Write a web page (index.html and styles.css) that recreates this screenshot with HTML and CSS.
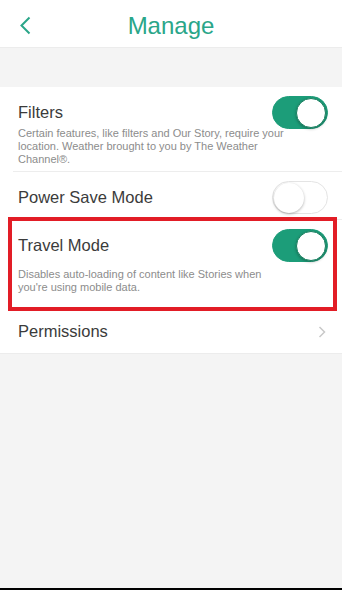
FILE: index.html
```html
<!DOCTYPE html>
<html>
	<head>
		<meta charset="utf-8">
		<title>Manage</title>
		<meta name="viewport" content="width=device-width">
		<link rel="stylesheet" href="styles.css">
	</head>
	<body>

		<header class="barra">
			<a class="atras" href="#">
				<svg width="12" height="19" viewBox="0 0 12 19"><polyline points="10.5,1.5 2.5,9.5 10.5,17.5" fill="none" stroke="#2aa689" stroke-width="2"/></svg>
			</a>
			<h1 class="titulo">Manage</h1>
			<span></span>
		</header>

		<div class="banda"></div>

		<ul class="lista">
			<li class="fila">
				<div class="cabeza">
					<span class="nombre">Filters</span>
					<span class="switch on"><span class="bola"></span></span>
				</div>
				<p class="desc">Certain features, like filters and Our Story, require your location. Weather brought to you by The Weather Channel®.</p>
			</li>
			<li class="fila">
				<div class="cabeza">
					<span class="nombre">Power Save Mode</span>
					<span class="switch"><span class="bola"></span></span>
				</div>
			</li>
			<li class="fila marcada">
				<div class="cabeza">
					<span class="nombre">Travel Mode</span>
					<span class="switch on"><span class="bola"></span></span>
				</div>
				<p class="desc desc2">Disables auto-loading of content like Stories when you're using mobile data.</p>
			</li>
			<li class="fila">
				<div class="cabeza">
					<span class="nombre">Permissions</span>
					<svg class="flecha" width="8" height="12" viewBox="0 0 8 12"><polyline points="1.5,1 6.5,6 1.5,11" fill="none" stroke="#c9c9c9" stroke-width="1.5"/></svg>
				</div>
			</li>
		</ul>

		<div class="relleno"></div>

	</body>
</html>
```
FILE: styles.css
```css
* {
    margin: 0;
    padding: 0;
    box-sizing: border-box;
    font-family: "Liberation Sans", Arial, Helvetica, sans-serif;
}

body {
    width: 342px;
    height: 590px;
    display: flex;
    flex-direction: column;
    background-color: #ffffff;
}

/* barra superior */
.barra {
    height: 48px;
    display: grid;
    grid-template-columns: 48px 1fr 48px;
    align-items: center;
    padding-top: 4px;
    background-color: #ffffff;
    border-bottom: 1px solid #ececec;
}

.atras {
    display: flex;
    padding-left: 19px;
}

.titulo {
    text-align: center;
    font-size: 24px;
    font-weight: normal;
    color: #2aa689;
}

.banda {
    height: 39px;
    background-color: #f4f4f4;
}

/* lista de opciones */
.lista {
    list-style: none;
    background-color: #ffffff;
}

.fila {
    margin-left: 13px;
    padding: 9px 14px 5px 5px;
    position: relative;
}

.fila + .fila {
    border-top: 1px solid #ededed;
}

.cabeza {
    height: 33px;
    display: flex;
    justify-content: space-between;
    align-items: center;
}

.nombre {
    font-size: 16.5px;
    color: #3b3b3b;
}

.desc {
    font-size: 11px;
    line-height: 13px;
    color: #8c8c8c;
    margin-top: -2px;
    width: 272px;
}

.desc2 {
    margin-top: 6px;
    margin-bottom: 7px;
}

/* cuadro rojo */
.marcada::after {
    content: "";
    position: absolute;
    left: -5px;
    right: 5px;
    top: -3px;
    bottom: -5px;
    border: 4px solid #e21d26;
}

.marcada + .fila {
    border-top: none;
}

/* interruptores */
.switch {
    width: 56px;
    height: 33px;
    border-radius: 17px;
    background-color: #ffffff;
    border: 1.5px solid #e4e4e4;
    display: flex;
    align-items: center;
    padding: 0 1px;
}

.switch .bola {
    width: 30px;
    height: 30px;
    border-radius: 50%;
    background-color: #ffffff;
    box-shadow: 0 1px 3px rgba(0, 0, 0, 0.3);
}

.switch.on {
    background-color: #1c9d79;
    border-color: #1c9d79;
    justify-content: flex-end;
}

.switch.on .bola {
    border: 1.5px solid #17805f;
}

.flecha {
    margin-right: 2px;
}

.relleno {
    flex: 1;
    background-color: #f4f4f4;
    border-top: 1px solid #ececec;
    border-bottom: 2px solid #000000;
}
```
